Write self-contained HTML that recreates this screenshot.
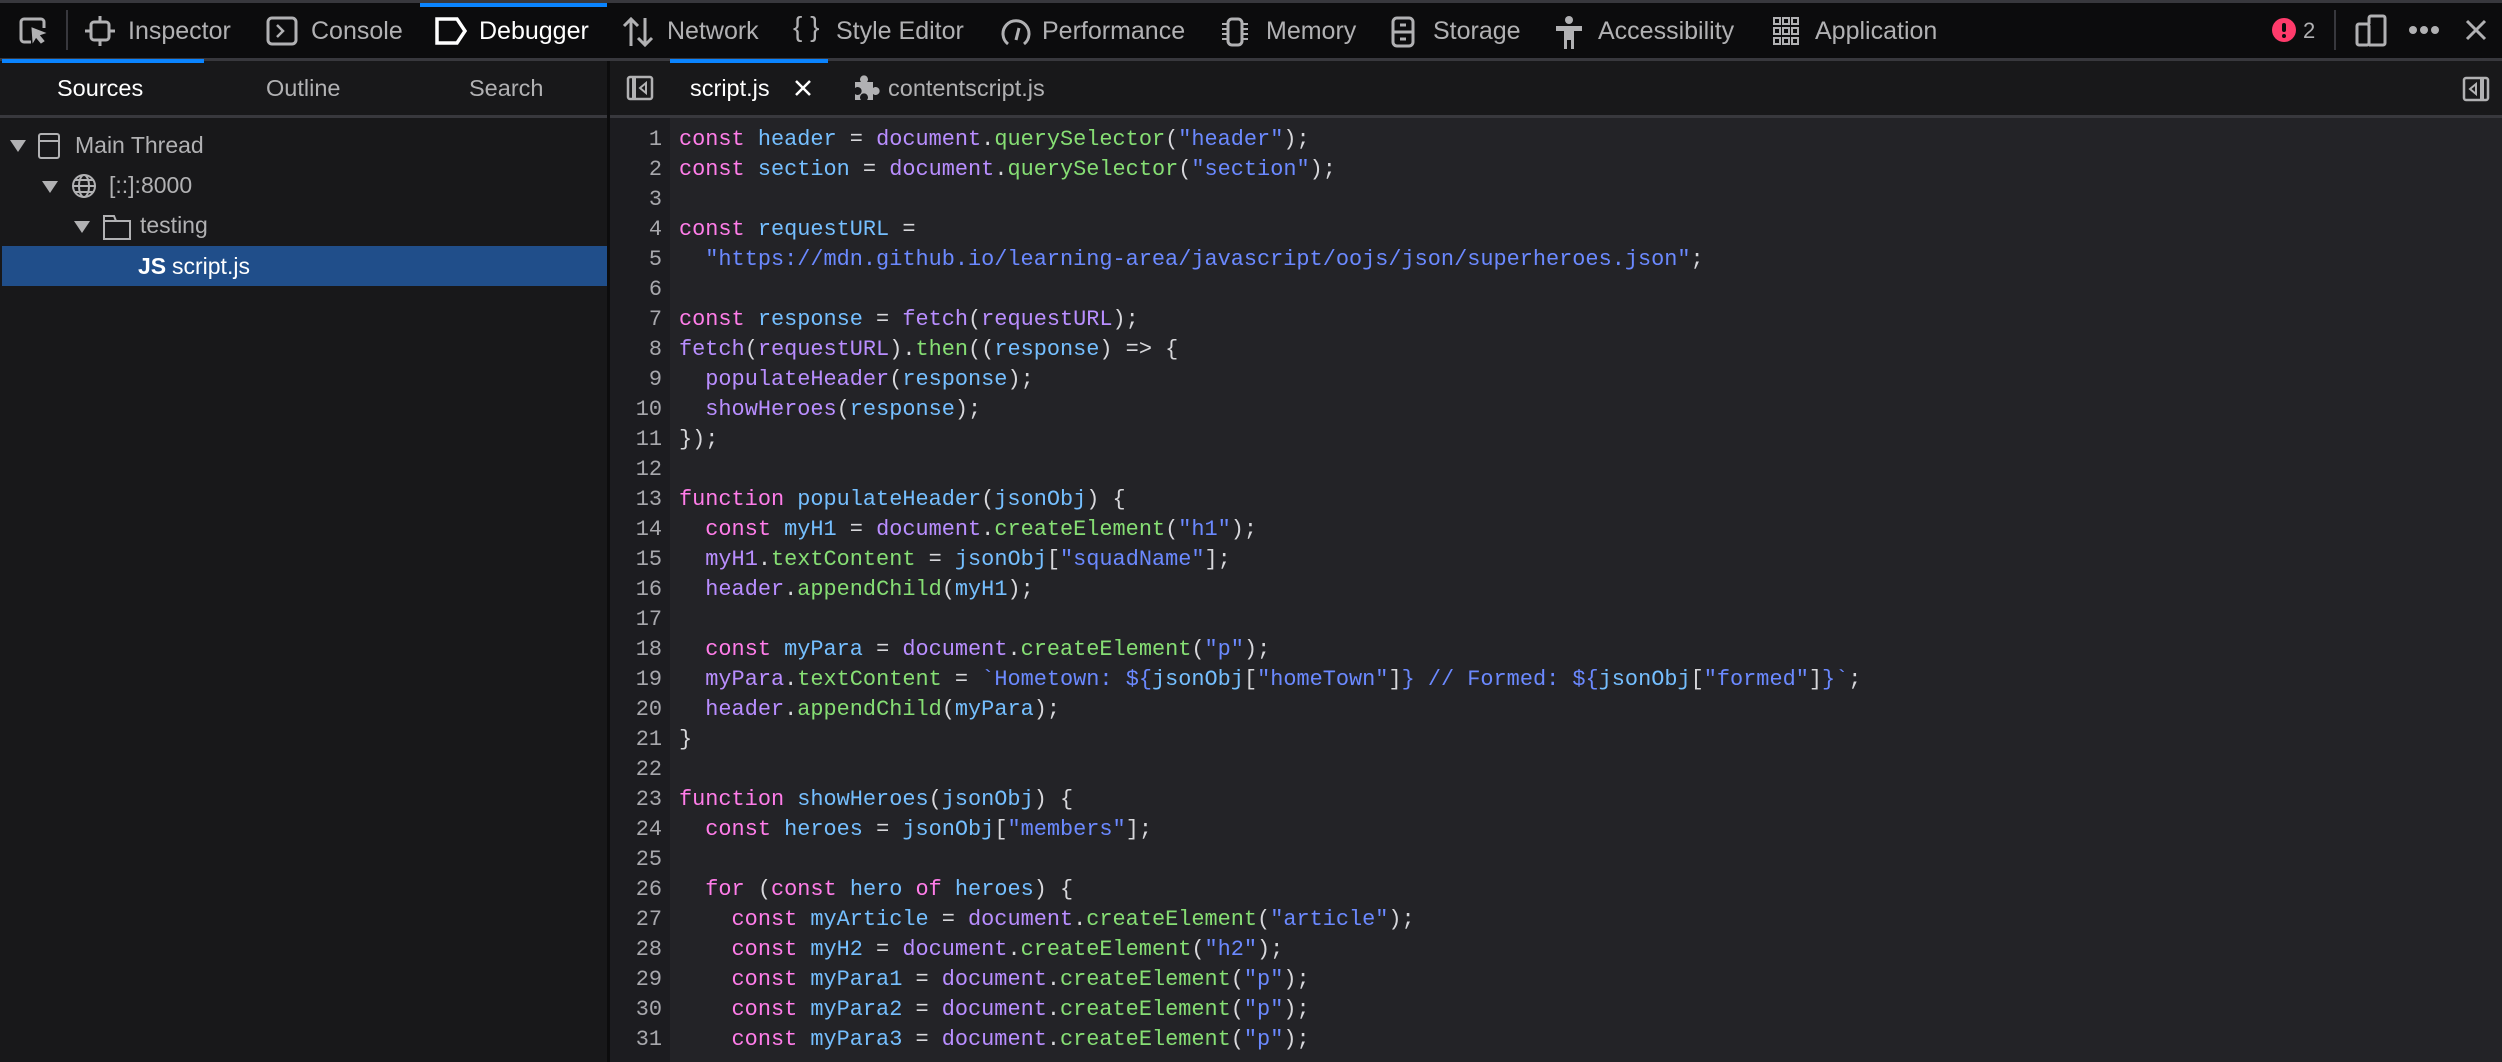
<!DOCTYPE html>
<html><head><meta charset="utf-8"><style>
*{margin:0;padding:0;box-sizing:border-box}
body{width:2502px;height:1062px;background:#232327;overflow:hidden;position:relative;font-family:"Liberation Sans",sans-serif}
.a{position:absolute}
#tb{left:0;top:0;width:2502px;height:58px;background:#0c0c0d;border-top:3px solid #38383d}
#tb2{left:0;top:58px;width:2502px;height:3px;background:#38383d}
.t{position:absolute;top:16px;font-size:25px;color:#b1b1b3;line-height:30px;white-space:nowrap}
.ic{position:absolute;top:16px}
#row2{left:0;top:61px;width:2502px;height:55px;background:#18181a}
#row2b{left:0;top:115px;width:2502px;height:3px;background:#38383d}
.st{position:absolute;top:73px;font-size:23.5px;color:#b1b1b3;line-height:30px;white-space:nowrap}
#left{left:0;top:118px;width:608px;height:944px;background:#18181a}
#div{left:607px;top:61px;width:3px;height:1001px;background:#0c0c0d}
#gut{left:610px;top:118px;width:60px;height:944px;background:#1c1c20}
.tr{position:absolute;font-size:23px;color:#b1b1b3;line-height:30px;white-space:nowrap}
pre{position:absolute;left:0;top:125px;font-family:"Liberation Mono",monospace;font-size:21.9px;line-height:30px;color:#d7d7db}
#nums{left:610px;width:52px;text-align:right;color:#a8a8ad}
#code{left:679px}
.k{color:#ff7de9}.d{color:#75bfff}.v{color:#b98eff}.m{color:#86de74}.s{color:#6b89ff}
</style></head><body>
<div id="tb" class="a"></div><div id="tb2" class="a"></div>
<svg class="ic" style="left:18px" width="32" height="30" viewBox="0 0 32 30" fill="none" stroke="#b1b1b3" stroke-width="3"><path d="M13 26H6a3 3 0 0 1-3-3V6a3 3 0 0 1 3-3h17a3 3 0 0 1 3 3v6"/><path d="M14 12l13 5-6 2 5 6-3 2-5-6-3 5z" fill="#b1b1b3" stroke-width="1"/></svg>
<div class="a" style="left:66px;top:10px;width:2px;height:40px;background:#38383d"></div>
<svg class="ic" style="left:84px" width="32" height="30" viewBox="0 0 32 30" fill="none" stroke="#b1b1b3" stroke-width="3"><rect x="7" y="6" width="18" height="18" rx="3"/><path d="M16 0v6M16 24v6M1 15h6M25 15h6"/></svg>
<div class="t" style="left:128px">Inspector</div>
<svg class="ic" style="left:266px" width="32" height="30" viewBox="0 0 32 30" fill="none" stroke="#b1b1b3" stroke-width="3"><rect x="2" y="2" width="28" height="26" rx="4"/><path d="M11 9l6 6-6 6" stroke-width="2.5"/></svg>
<div class="t" style="left:311px">Console</div>
<div class="a" style="left:420px;top:3px;width:187px;height:4px;background:#0a84ff"></div>
<svg class="ic" style="left:434px" width="34" height="30" viewBox="0 0 34 30" fill="none" stroke="#fff" stroke-width="3.5"><path d="M3 3h20l8 12-8 12H3z"/></svg>
<div class="t" style="left:479px;color:#fff">Debugger</div>
<svg class="ic" style="left:622px" width="32" height="32" viewBox="0 0 32 32" fill="none" stroke="#b1b1b3" stroke-width="3"><path d="M9 30V3M2 10l7-7 7 7M23 2v27M16 22l7 7 7-7"/></svg>
<div class="t" style="left:667px">Network</div>
<div class="t" style="left:793px;font-size:28px;top:12px">{ }</div>
<div class="t" style="left:836px">Style Editor</div>
<svg class="ic" style="left:1000px" width="32" height="32" viewBox="0 0 32 32" fill="none" stroke="#b1b1b3" stroke-width="3"><path d="M8 28A13 13 0 1 1 24 28"/><path d="M16 24l3-12"/></svg>
<div class="t" style="left:1042px">Performance</div>
<svg class="ic" style="left:1219px" width="32" height="32" viewBox="0 0 32 32" fill="none" stroke="#b1b1b3" stroke-width="3"><rect x="9" y="3" width="14" height="26" rx="4"/><path d="M3 8h5M3 13h5M3 18h5M3 23h5M24 8h5M24 13h5M24 18h5M24 23h5" stroke-width="2"/></svg>
<div class="t" style="left:1266px">Memory</div>
<svg class="ic" style="left:1390px" width="28" height="32" viewBox="0 0 28 32" fill="none" stroke="#b1b1b3" stroke-width="3"><rect x="3" y="2" width="20" height="28" rx="4"/><path d="M3 16h20M10 9h6M10 23h6"/></svg>
<div class="t" style="left:1433px">Storage</div>
<svg class="ic" style="left:1554px" width="30" height="34" viewBox="0 0 30 34" fill="#b1b1b3"><circle cx="15" cy="4" r="4"/><path d="M2 10h26v5h-8v18h-3v-9h-4v9h-3V15H2z"/></svg>
<div class="t" style="left:1598px">Accessibility</div>
<svg class="ic" style="left:1772px" width="28" height="30" viewBox="0 0 28 30" fill="none" stroke="#b1b1b3" stroke-width="2"><rect x="2" y="2" width="6" height="6"/><rect x="11" y="2" width="6" height="6"/><rect x="20" y="2" width="6" height="6"/><rect x="2" y="12" width="6" height="6"/><rect x="11" y="12" width="6" height="6"/><rect x="20" y="12" width="6" height="6"/><rect x="2" y="22" width="6" height="6"/><rect x="11" y="22" width="6" height="6"/><rect x="20" y="22" width="6" height="6"/></svg>
<div class="t" style="left:1815px">Application</div>
<svg class="a" style="left:2272px;top:18px" width="24" height="24" viewBox="0 0 24 24"><circle cx="12" cy="12" r="12" fill="#ff3b6b"/><rect x="10" y="5" width="4" height="9" rx="2" fill="#0c0c0d"/><circle cx="12" cy="18" r="2" fill="#0c0c0d"/></svg>
<div class="t" style="left:2303px;font-size:22px">2</div>
<div class="a" style="left:2334px;top:10px;width:2px;height:40px;background:#38383d"></div>
<svg class="a" style="left:2355px;top:14px" width="33" height="33" viewBox="0 0 33 33" fill="none" stroke="#b1b1b3" stroke-width="3"><rect x="2" y="10" width="12" height="21" rx="2"/><path d="M14 31h14a2 2 0 0 0 2-2V4a2 2 0 0 0-2-2H16a2 2 0 0 0-2 2v6"/></svg>
<svg class="a" style="left:2408px;top:24px" width="32" height="12" viewBox="0 0 32 12" fill="#b1b1b3"><circle cx="5" cy="6" r="4"/><circle cx="16" cy="6" r="4"/><circle cx="27" cy="6" r="4"/></svg>
<svg class="a" style="left:2465px;top:19px" width="22" height="22" viewBox="0 0 22 22" stroke="#b1b1b3" stroke-width="3"><path d="M2 2l18 18M20 2L2 20"/></svg>

<div id="row2" class="a"></div><div id="row2b" class="a"></div>
<div class="a" style="left:2px;top:59px;width:202px;height:4px;background:#0a84ff"></div>
<div class="st" style="left:57px;color:#fff">Sources</div>
<div class="st" style="left:266px">Outline</div>
<div class="st" style="left:469px">Search</div>
<svg class="a" style="left:626px;top:75px" width="28" height="26" viewBox="0 0 28 26" fill="none" stroke="#b1b1b3" stroke-width="2.5"><rect x="2" y="2" width="24" height="22" rx="2"/><path d="M8 2v22" stroke-width="4"/><path d="M20 8l-6 5 6 5z" stroke-width="2"/></svg>
<div class="a" style="left:670px;top:59px;width:158px;height:4px;background:#0a84ff"></div>
<div class="st" style="left:690px;color:#fff">script.js</div>
<svg class="a" style="left:794px;top:79px" width="18" height="18" viewBox="0 0 18 18" stroke="#fff" stroke-width="2.5"><path d="M2 2l14 14M16 2L2 16"/></svg>
<svg class="a" style="left:852px;top:74px" width="28" height="28" viewBox="0 0 28 28" fill="#b1b1b3"><path d="M3 8h6a4 4 0 1 1 6 0h6v6a4 4 0 1 1 0 6v6h-6a4 4 0 1 0-6 0H3v-6a4 4 0 1 0 0-6z"/></svg>
<div class="st" style="left:888px">contentscript.js</div>
<svg class="a" style="left:2462px;top:76px" width="28" height="26" viewBox="0 0 28 26" fill="none" stroke="#b1b1b3" stroke-width="2.5"><rect x="2" y="2" width="24" height="22" rx="2"/><path d="M20 2v22" stroke-width="4"/><path d="M14 8l-6 5 6 5z" stroke-width="2"/></svg>

<div id="left" class="a"></div>
<div id="div" class="a"></div>
<div id="gut" class="a"></div>
<svg class="a" style="left:10px;top:140px" width="16" height="12"><path d="M0 0h16L8 12z" fill="#b1b1b3"/></svg>
<svg class="a" style="left:37px;top:132px" width="24" height="28" fill="none" stroke="#b1b1b3" stroke-width="2"><rect x="2" y="2" width="20" height="24" rx="2"/><path d="M2 9h20"/></svg>
<div class="tr" style="left:75px;top:130px">Main Thread</div>
<svg class="a" style="left:42px;top:181px" width="16" height="12"><path d="M0 0h16L8 12z" fill="#b1b1b3"/></svg>
<svg class="a" style="left:71px;top:173px" width="26" height="26" fill="none" stroke="#b1b1b3" stroke-width="2"><circle cx="13" cy="13" r="11"/><ellipse cx="13" cy="13" rx="5" ry="11"/><path d="M2 13h22M4 7h18M4 19h18"/></svg>
<div class="tr" style="left:109px;top:170px">[::]:8000</div>
<svg class="a" style="left:74px;top:221px" width="16" height="12"><path d="M0 0h16L8 12z" fill="#b1b1b3"/></svg>
<svg class="a" style="left:102px;top:213px" width="30" height="28" fill="none" stroke="#b1b1b3" stroke-width="2"><path d="M2 26V3h10l2 5h14v18z"/><path d="M14 8H2"/></svg>
<div class="tr" style="left:140px;top:210px">testing</div>
<div class="a" style="left:2px;top:246px;width:605px;height:40px;background:#204e8a"></div>
<div class="tr" style="left:138px;top:251px;color:#fff;font-weight:bold">JS</div>
<div class="tr" style="left:172px;top:251px;color:#fff">script.js</div>

<pre id="nums" class="a">1
2
3
4
5
6
7
8
9
10
11
12
13
14
15
16
17
18
19
20
21
22
23
24
25
26
27
28
29
30
31</pre>
<pre id="code" class="a"><span class="k">const</span> <span class="d">header</span> = <span class="v">document</span>.<span class="m">querySelector</span>(<span class="s">"header"</span>);
<span class="k">const</span> <span class="d">section</span> = <span class="v">document</span>.<span class="m">querySelector</span>(<span class="s">"section"</span>);

<span class="k">const</span> <span class="d">requestURL</span> =
  <span class="s">"https://mdn.github.io/learning-area/javascript/oojs/json/superheroes.json"</span>;

<span class="k">const</span> <span class="d">response</span> = <span class="v">fetch</span>(<span class="v">requestURL</span>);
<span class="v">fetch</span>(<span class="v">requestURL</span>).<span class="m">then</span>((<span class="d">response</span>) =&gt; {
  <span class="v">populateHeader</span>(<span class="d">response</span>);
  <span class="v">showHeroes</span>(<span class="d">response</span>);
});

<span class="k">function</span> <span class="d">populateHeader</span>(<span class="d">jsonObj</span>) {
  <span class="k">const</span> <span class="d">myH1</span> = <span class="v">document</span>.<span class="m">createElement</span>(<span class="s">"h1"</span>);
  <span class="v">myH1</span>.<span class="m">textContent</span> = <span class="d">jsonObj</span>[<span class="s">"squadName"</span>];
  <span class="v">header</span>.<span class="m">appendChild</span>(<span class="d">myH1</span>);

  <span class="k">const</span> <span class="d">myPara</span> = <span class="v">document</span>.<span class="m">createElement</span>(<span class="s">"p"</span>);
  <span class="v">myPara</span>.<span class="m">textContent</span> = <span class="s">`Hometown: ${</span><span class="d">jsonObj</span>[<span class="s">"homeTown"</span>]<span class="s">} // Formed: ${</span><span class="d">jsonObj</span>[<span class="s">"formed"</span>]<span class="s">}`</span>;
  <span class="v">header</span>.<span class="m">appendChild</span>(<span class="d">myPara</span>);
}

<span class="k">function</span> <span class="d">showHeroes</span>(<span class="d">jsonObj</span>) {
  <span class="k">const</span> <span class="d">heroes</span> = <span class="d">jsonObj</span>[<span class="s">"members"</span>];

  <span class="k">for</span> (<span class="k">const</span> <span class="d">hero</span> <span class="k">of</span> <span class="d">heroes</span>) {
    <span class="k">const</span> <span class="d">myArticle</span> = <span class="v">document</span>.<span class="m">createElement</span>(<span class="s">"article"</span>);
    <span class="k">const</span> <span class="d">myH2</span> = <span class="v">document</span>.<span class="m">createElement</span>(<span class="s">"h2"</span>);
    <span class="k">const</span> <span class="d">myPara1</span> = <span class="v">document</span>.<span class="m">createElement</span>(<span class="s">"p"</span>);
    <span class="k">const</span> <span class="d">myPara2</span> = <span class="v">document</span>.<span class="m">createElement</span>(<span class="s">"p"</span>);
    <span class="k">const</span> <span class="d">myPara3</span> = <span class="v">document</span>.<span class="m">createElement</span>(<span class="s">"p"</span>);</pre>
</body></html>
